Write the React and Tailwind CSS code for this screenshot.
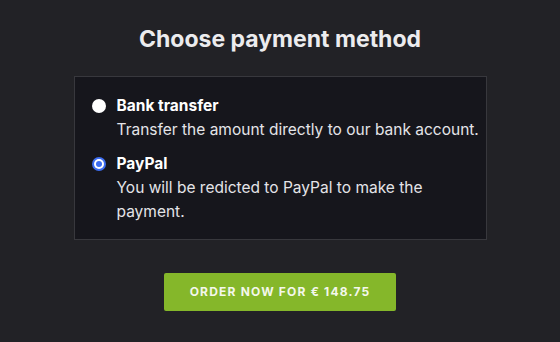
const options = [
  {
    id: 'bank',
    title: 'Bank transfer',
    text: 'Transfer the amount directly to our bank account.',
  },
  {
    id: 'paypal',
    title: 'PayPal',
    text: 'You will be redicted to PayPal to make the payment.',
  },
];

const Radio = ({ checked }) =>
  checked ? (
    <span className="mt-[5px] flex h-3.5 w-3.5 shrink-0 items-center justify-center rounded-full bg-[#3d6df0]">
      <span className="flex h-2.5 w-2.5 items-center justify-center rounded-full bg-white">
        <span className="h-1.5 w-1.5 rounded-full bg-[#3d6df0]" />
      </span>
    </span>
  ) : (
    <span className="mt-[5px] h-3.5 w-3.5 shrink-0 rounded-full bg-white" />
  );

export default function App() {
  const selected = 'paypal';

  return (
    <div className="flex min-h-[342px] flex-col items-center bg-[#222226] pt-[25px] font-['Inter',sans-serif] text-[#ececee]">
      <h1 className="text-[23px] font-bold leading-7">Choose payment method</h1>

      <div className="mt-[23px] flex w-[413px] flex-col gap-[10px] border border-[#38383d] bg-[#16161c] pb-[15px] pl-[17px] pr-[6px] pt-[17px]">
        {options.map((opt) => (
          <label key={opt.id} className="flex gap-[11px]">
            <Radio checked={opt.id === selected} />
            <div className="text-[15.5px] leading-6">
              <div className="font-bold text-white">{opt.title}</div>
              <div className="text-[#e4e4e8]">{opt.text}</div>
            </div>
          </label>
        ))}
      </div>

      <button className="mt-[33px] h-[38px] w-[232px] rounded-[2px] bg-[#85b72a] text-[12px] font-bold uppercase tracking-[1.2px] text-[#f4f7ec]">
        Order now for € 148.75
      </button>
    </div>
  );
}
